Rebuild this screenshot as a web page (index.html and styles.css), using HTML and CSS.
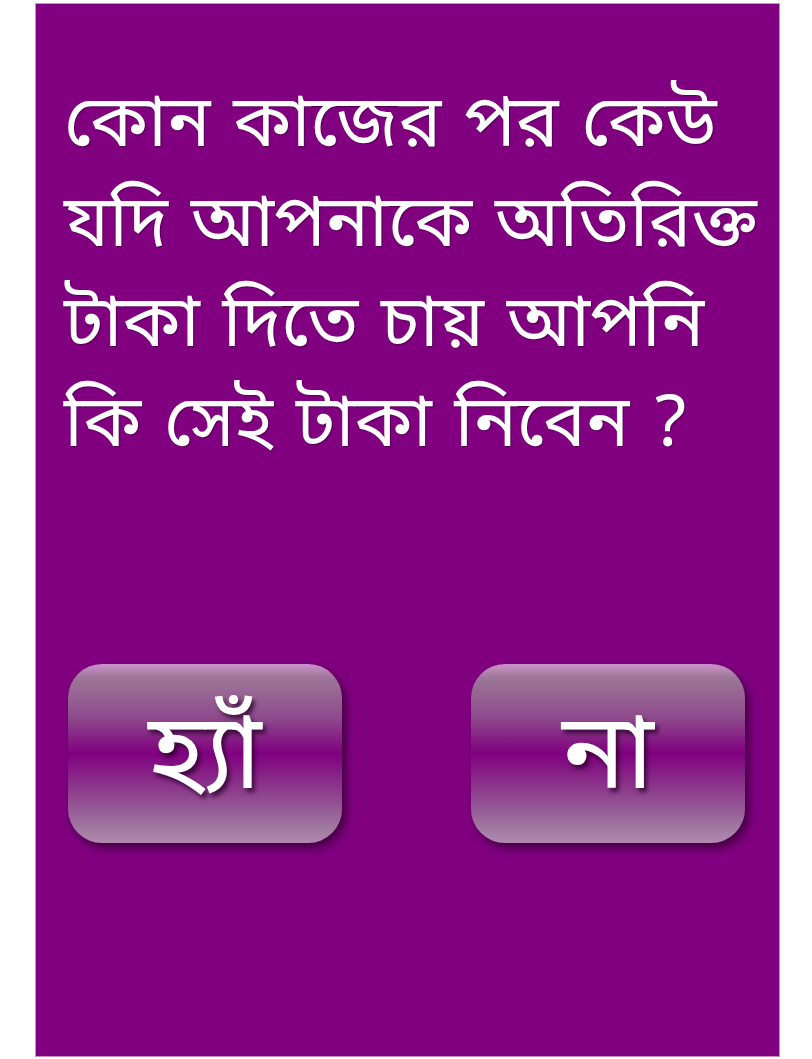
FILE: index.html
```html
<!DOCTYPE html>
<html lang="bn">
<head>
<meta charset="utf-8">
<title>প্রশ্ন</title>
<link rel="stylesheet" href="styles.css">
</head>
<body>
<main class="panel">
  <p class="question">কোন কাজের পর কেউ<br>যদি আপনাকে অতিরিক্ত<br>টাকা দিতে চায় আপনি<br>কি সেই টাকা নিবেন ?</p>
  <div class="answers">
    <button class="answer" type="button">হ্যাঁ</button>
    <button class="answer" type="button">না</button>
  </div>
</main>
</body>
</html>
```

FILE: styles.css
```css
html, body {
  margin: 0;
  padding: 0;
  background: #ffffff;
}

body {
  padding: 3px 0 2px 35px;
  font-family: "Noto Sans Bengali", "Lohit Bengali", "Noto Sans", "DejaVu Sans", sans-serif;
}

.panel {
  box-sizing: border-box;
  width: 745px;
  height: 1054px;
  background: #800080;
  border: 1px solid #c890c8;
  padding: 74px 10px 0 28px;
}

.question {
  margin: 0;
  color: #ffffff;
  font-size: 72px;
  line-height: 100px;
  word-spacing: 4px;
  white-space: nowrap;
  text-shadow: 1px 1px 1px rgba(0, 0, 0, 0.35);
}

.answers {
  display: flex;
  justify-content: space-between;
  margin-top: 186px;
  padding: 0 24px 0 4px;
}

.answer {
  width: 274px;
  height: 179px;
  border: none;
  border-radius: 34px;
  color: #ffffff;
  font-family: inherit;
  font-size: 106px;
  line-height: 1;
  padding: 14px 0 0;
  text-shadow: 3px 4px 4px rgba(40, 0, 40, 0.75);
  background: linear-gradient(to bottom,
    #cc92cc 0%,
    #9c7698 8%,
    #8e4a8c 30%,
    #800080 50%,
    #8c3a8c 70%,
    #a07aa0 92%,
    #b08ab0 100%);
  box-shadow: 4px 5px 8px rgba(40, 0, 40, 0.7);
  cursor: pointer;
}
```
